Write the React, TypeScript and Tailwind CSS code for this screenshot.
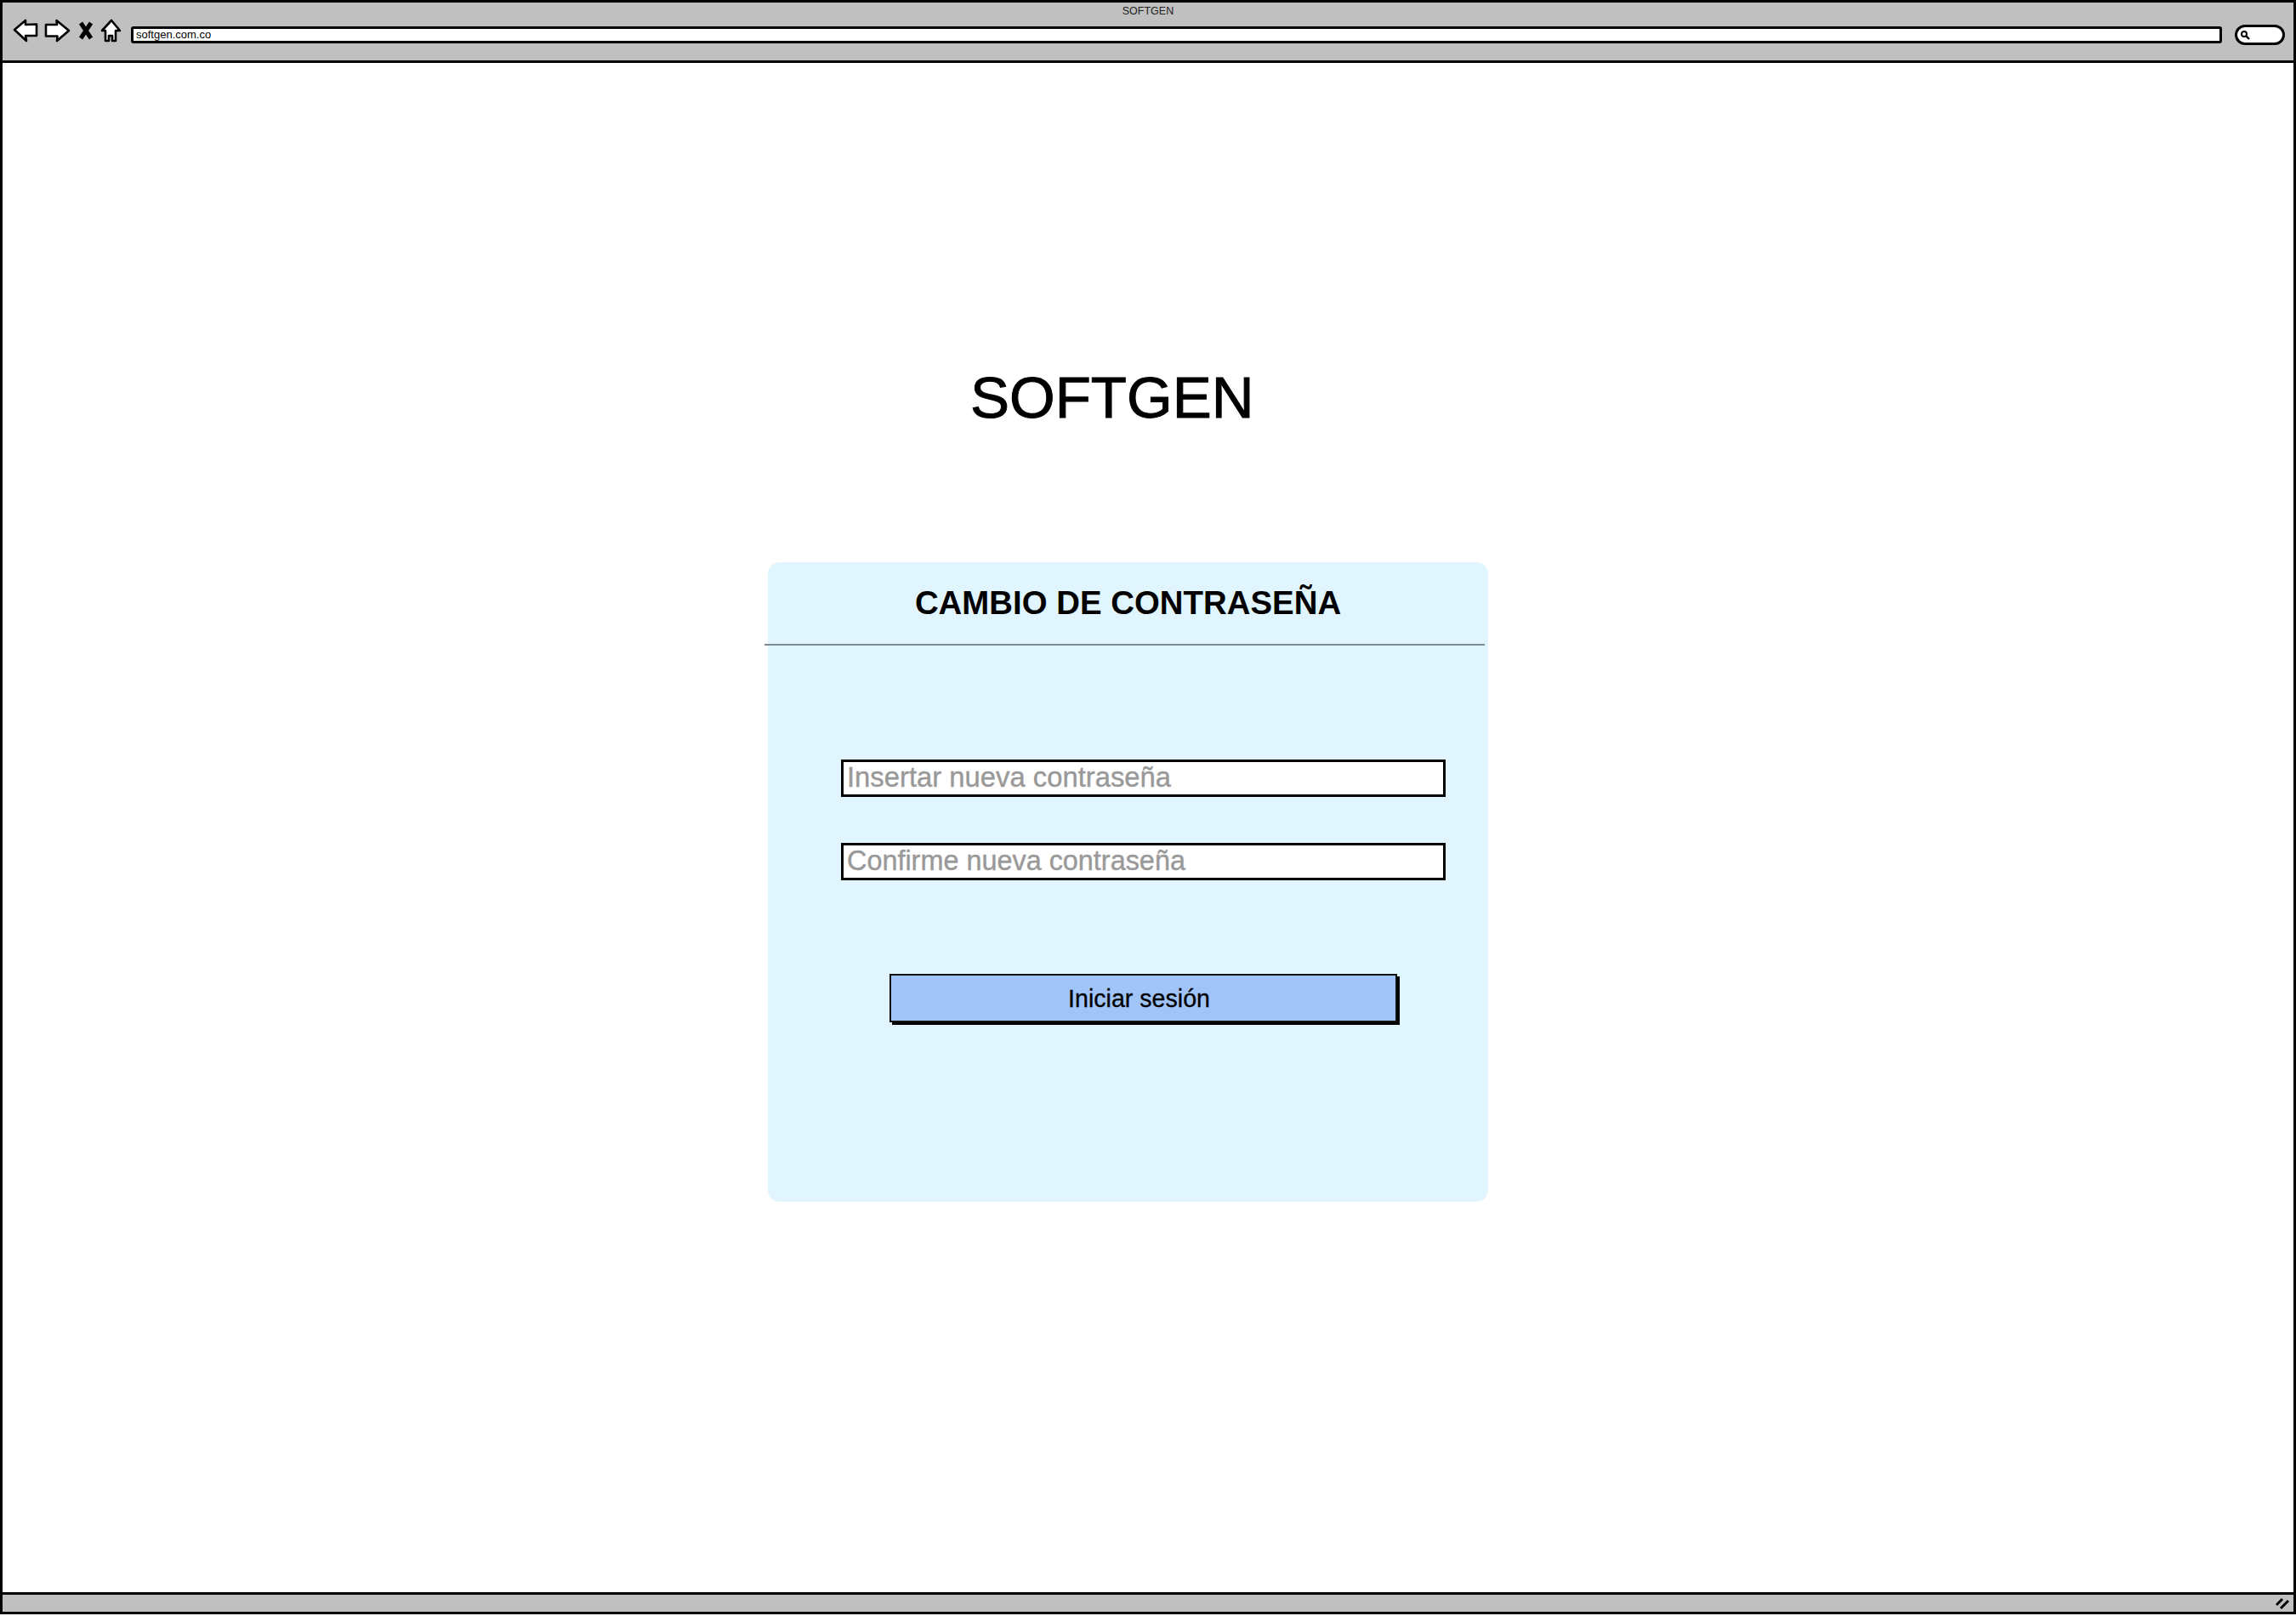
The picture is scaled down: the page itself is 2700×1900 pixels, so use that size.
const sans = "font-['Liberation_Sans',Arial,sans-serif]";

function BrowserIcons() {
  return (
    <div className="flex items-center mb-[8px]">
      <svg width="130" height="30" viewBox="0 0 130 30" className="ml-[11px] shrink-0">
        <g fill="#fff" stroke="#000" strokeWidth="2.6" strokeLinejoin="round">
          <path d="M3 13 L16 2 L16 7 L29 6.5 L29 20 L16 20 L17 26 Z" />
          <path d="M40 7 L53 7 L52.5 2 L67 14 L53 26 L53.5 20.5 L40 20.5 Z" />
          <path d="M106 14 L117 2 L127 14 L122 14 L122 26 L118 26 L118 20 L114 20 L114 26 L110 26 L110 14 Z" />
        </g>
        <path d="M81 5 L93 23 M93 5 L81 23" stroke="#000" strokeWidth="5" fill="none" />
      </svg>
    </div>
  );
}

function TopBar() {
  return (
    <header className="h-[74px] shrink-0 bg-[#c0c0c0] border-[3px] border-black flex flex-col">
      <div className={`${sans} h-[20px] pt-[2px] text-center text-[12.5px] leading-[16px] text-[#222]`}>SOFTGEN</div>
      <div className="flex items-center mt-[3px] h-[30px]">
        <BrowserIcons />
        <div className={`${sans} ml-[10px] w-[2459px] h-[20px] bg-white border-[3px] border-black rounded-[3px] pl-[3px] text-[13px] leading-[14px] text-black`}>
          softgen.com.co
        </div>
        <div className="ml-[15px] w-[59px] h-[24px] bg-white border-[3px] border-black rounded-full flex items-center pl-[3px]">
          <svg width="12" height="12" viewBox="0 0 12 12">
            <circle cx="5" cy="5" r="3" fill="none" stroke="#000" strokeWidth="2" />
            <path d="M7.5 7.5 L11 11" stroke="#000" strokeWidth="2.4" />
          </svg>
        </div>
      </div>
    </header>
  );
}

function Field({ label, size }: { label: string; size: string }) {
  return (
    <div
      className={`${sans} ${size} w-[711px] h-[44px] bg-white border-[3px] border-black pl-[4px] leading-[36px] text-[#999] [-webkit-text-stroke:0.4px_#999]`}
    >
      {label}
    </div>
  );
}

function Card() {
  return (
    <section className="ml-[900px] mt-[153px] w-[847px] h-[752px] bg-[#e1f5fe] rounded-[14px] flex flex-col">
      <h2 className={`${sans} h-[96px] pt-[26px] text-center text-[38.4px] leading-[44px] font-bold text-black`}>
        CAMBIO DE CONTRASEÑA
      </h2>
      <div className="h-[2px] -ml-[4px] w-[847px] bg-[#7b8a93]"></div>
      <div className="ml-[86px] mt-[134px] flex flex-col gap-[54px]">
        <Field label="Insertar nueva contraseña" size="text-[32.8px]" />
        <Field label="Confirme nueva contraseña" size="text-[32.4px]" />
      </div>
      <button
        className={`${sans} ml-[143px] mt-[110px] w-[597px] h-[57px] bg-[#a1c4f8] border-2 border-[#111] shadow-[3px_3px_0_#000] pr-[10px] text-center text-[28.6px] leading-[30px] text-black [-webkit-text-stroke:0.3px_#000]`}
      >
        Iniciar sesión
      </button>
    </section>
  );
}

export default function App() {
  return (
    <div className="w-[2700px] h-[1900px] bg-white flex flex-col">
      <TopBar />
      <main className="flex-1 border-x-[3px] border-black">
        <h1 className={`${sans} pl-[1138px] pt-[354px] text-[69px] leading-[80px] text-black [-webkit-text-stroke:1px_#000]`}>SOFTGEN</h1>
        <Card />
      </main>
      <footer className="mb-[2px] h-[26px] shrink-0 bg-[#c0c0c0] border-[3px] border-black flex items-center justify-end pr-[5px]">
        <svg width="16" height="14" viewBox="0 0 16 14">
          <path d="M1 9 L8 2 M6 13 L15 4" stroke="#000" strokeWidth="3" fill="none" />
        </svg>
      </footer>
    </div>
  );
}
